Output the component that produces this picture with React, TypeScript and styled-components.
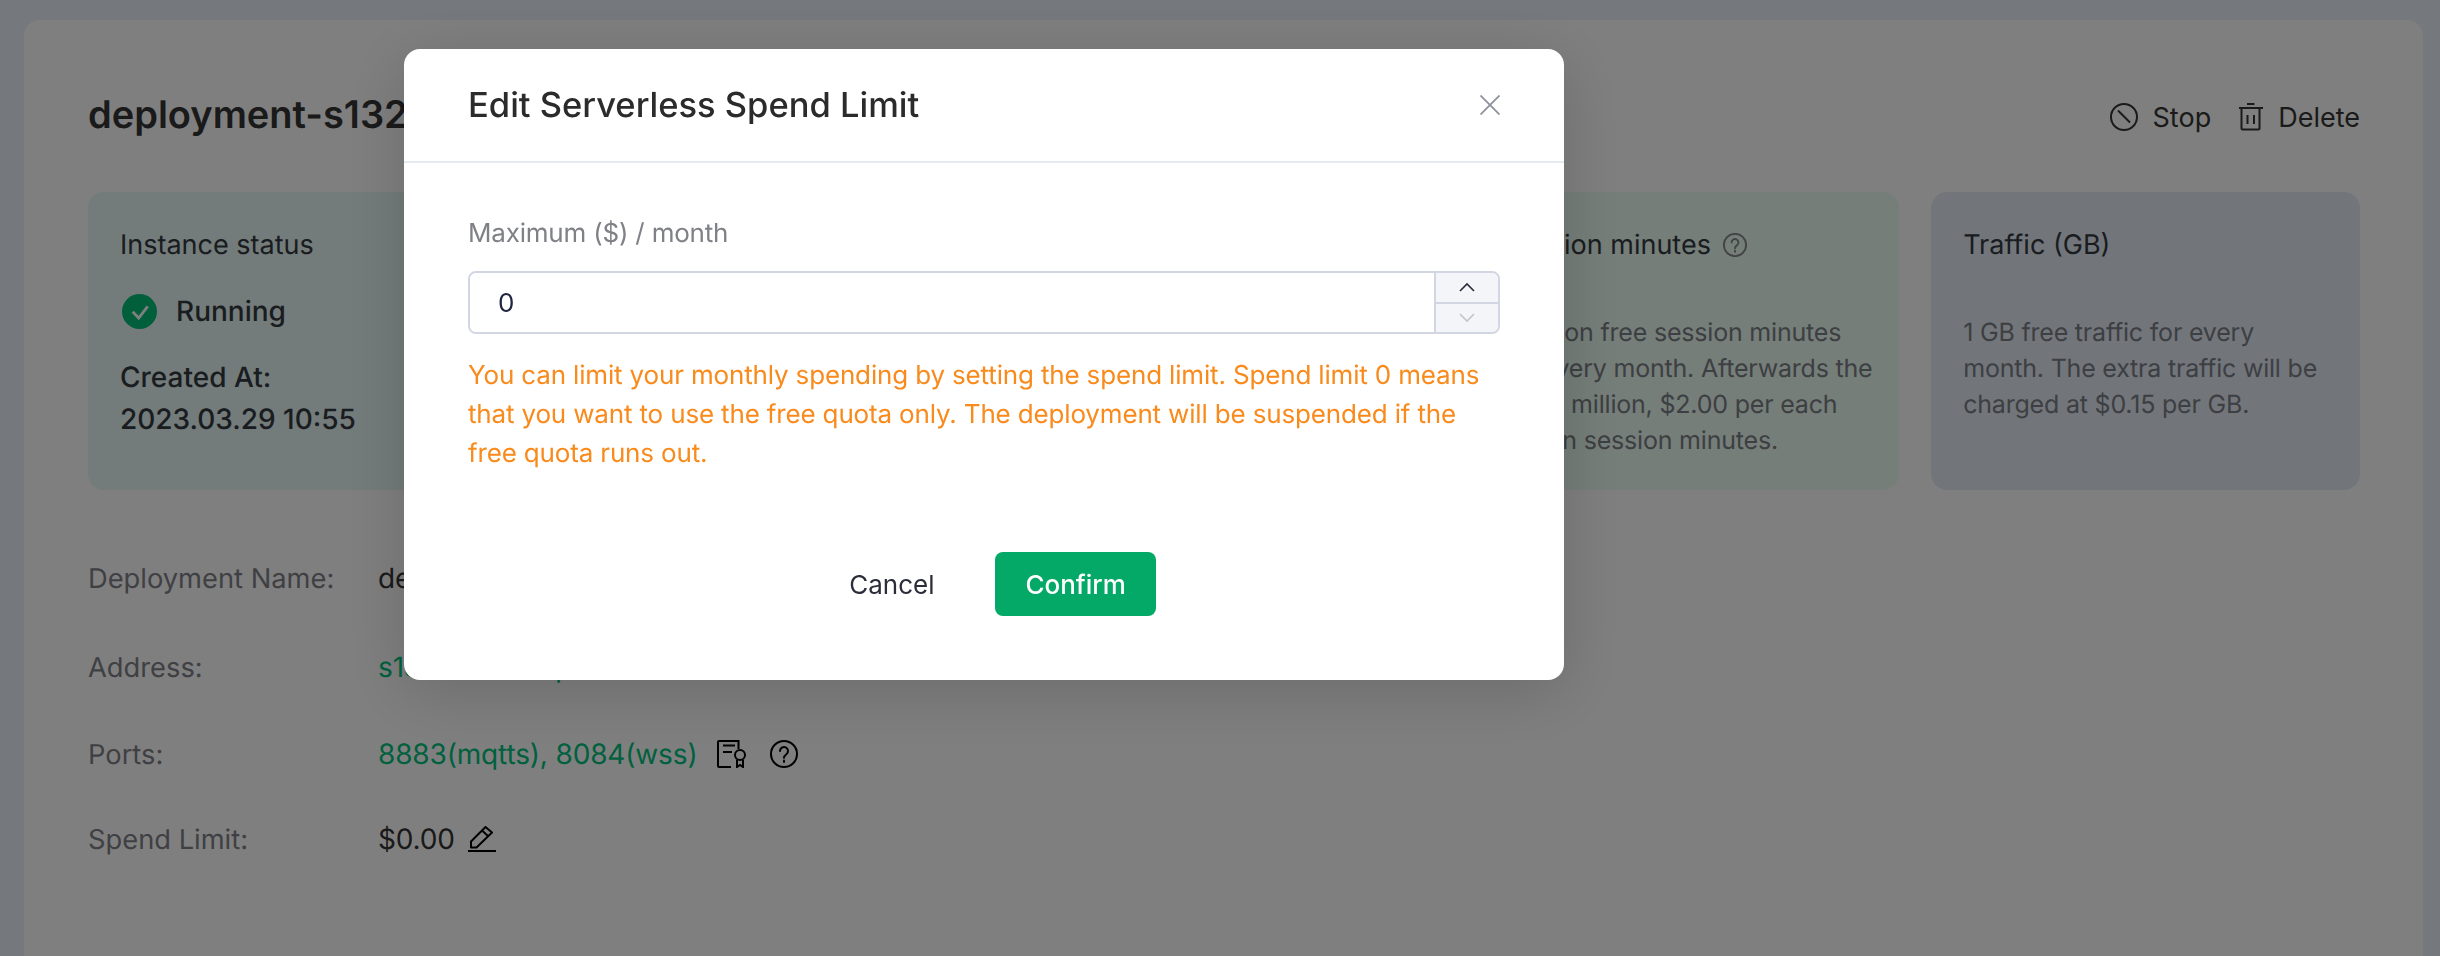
import * as React from 'react'
import styled, { createGlobalStyle } from 'styled-components'

const GlobalStyle = createGlobalStyle`
  html, body {
    margin: 0;
    height: 100%;
    overflow: hidden;
    background: #eaf2fc;
    font-family: Inter, "Noto Sans", sans-serif;
    text-rendering: geometricPrecision;
  }
`

const Page = styled.div`
  box-sizing: border-box;
  height: 956px;
  padding: 20px 17px 0 24px;
  overflow: hidden;
`

const Panel = styled.main`
  box-sizing: border-box;
  height: 100%;
  padding: 75px 63px 0 64px;
  background: #fff;
  border-radius: 16px 16px 0 0;
`

const Head = styled.header`
  display: flex;
  align-items: center;
  justify-content: space-between;
  height: 40px;
`

const Title = styled.h1`
  margin: 0;
  font-size: 38px;
  line-height: 40px;
  font-weight: 600;
  color: #353535;
`

const Actions = styled.div`
  display: flex;
  align-items: center;
  gap: 28px;
  padding-top: 4px;
`

const Action = styled.button`
  display: flex;
  align-items: center;
  gap: 15px;
  padding: 0;
  border: 0;
  background: none;
  font: inherit;
  font-size: 27px;
  color: #353535;
`

const Cards = styled.section`
  display: grid;
  grid-template-columns: repeat(5, minmax(0, 1fr));
  gap: 32px;
  margin-top: 57px;
`

const Card = styled.div<{ $tint: string }>`
  box-sizing: border-box;
  height: 298px;
  padding: 33px 32px;
  border-radius: 16px;
  background: ${p => p.$tint};
`

const CardTitle = styled.div`
  display: flex;
  align-items: center;
  gap: 12px;
  font-size: 27px;
  line-height: 40px;
  color: #353a40;
`

const CardText = styled.p<{ $nowrap?: boolean }>`
  margin: 50px 0 0;
  font-size: 25px;
  letter-spacing: -0.2px;
  line-height: 36px;
  white-space: ${p => (p.$nowrap ? 'nowrap' : 'normal')};
  color: #7a7e84;
`

const Status = styled.div`
  display: flex;
  align-items: center;
  gap: 19px;
  margin: 28px 0 0 2px;
  font-size: 28px;
  line-height: 36px;
  font-weight: 500;
  color: #353a40;
`

const Created = styled.div`
  margin-top: 27px;
  font-size: 28px;
  line-height: 42px;
  font-weight: 500;
  color: #353a40;
`

const Rows = styled.section`
  margin-top: 68px;
`

const Row = styled.div<{ $after?: number }>`
  display: flex;
  align-items: center;
  height: 40px;
  margin-bottom: ${p => p.$after ?? 0}px;
  font-size: 28px;
  letter-spacing: -0.15px;
`

const Label = styled.span`
  width: 290px;
  flex: none;
  font-size: 27.300px;
  letter-spacing: 0;
  color: #7f8186;
`

const Value = styled.span`
  color: #353535;
`

const LinkValue = styled.span`
  color: #02c27c;
`

const IconGroup = styled.span<{ $offset: number }>`
  display: flex;
  align-items: center;
  gap: 23px;
  margin-left: ${p => p.$offset}px;
`

const Overlay = styled.div`
  position: fixed;
  inset: 0;
  box-sizing: border-box;
  padding: 49px 0 0 404px;
  background: rgba(0, 0, 0, 0.5);
`

const Modal = styled.div`
  box-sizing: border-box;
  width: 1160px;
  height: 631px;
  background: #fff;
  border-radius: 16px;
  box-shadow: 0 12px 64px rgba(0, 0, 0, 0.16);
`

const ModalHead = styled.div`
  box-sizing: border-box;
  display: flex;
  align-items: center;
  justify-content: space-between;
  height: 114px;
  padding: 0 64px;
  border-bottom: 2px solid #e6eaf2;
`

const ModalTitle = styled.h2`
  margin: 0;
  font-size: 34.500px;
  font-weight: 500;
  color: #2b2b2b;
`

const ModalBody = styled.div`
  padding: 53px 64px 0;
`

const FieldLabel = styled.label`
  display: block;
  font-size: 26px;
  letter-spacing: -0.2px;
  line-height: 36px;
  color: #7f8186;
`

const InputBox = styled.div`
  box-sizing: border-box;
  display: flex;
  height: 63px;
  margin-top: 19px;
  border: 2px solid #d2d6e2;
  border-radius: 8px;
  overflow: hidden;
`

const NumberInput = styled.input`
  flex: 1;
  min-width: 0;
  padding: 0 28px;
  border: 0;
  outline: 0;
  font: inherit;
  font-size: 26px;
  color: #1f2440;
`

const Stepper = styled.div`
  display: flex;
  flex-direction: column;
  width: 62px;
  border-left: 2px solid #d2d6e2;
`

const StepButton = styled.span<{ $muted?: boolean }>`
  flex: 1;
  display: flex;
  align-items: center;
  justify-content: center;
  background: #f3f5f9;
  color: ${p => (p.$muted ? '#c2c5cc' : '#2b2d3a')};
  & + & {
    border-top: 2px solid #d2d6e2;
  }
`

const Hint = styled.p`
  margin: 22px 0 0;
  font-size: 26px;
  letter-spacing: -0.16px;
  line-height: 39px;
  color: #f98a1c;
`

const Footer = styled.div`
  display: flex;
  align-items: center;
  justify-content: center;
  gap: 31px;
  margin-top: 79px;
  padding-left: 7px;
`

const Button = styled.button<{ $primary?: boolean }>`
  box-sizing: border-box;
  height: 64px;
  padding: 0 30px;
  border: 0;
  border-radius: 8px;
  font: inherit;
  font-size: 26px;
  font-weight: ${p => (p.$primary ? 500 : 400)};
  color: ${p => (p.$primary ? '#fff' : '#2b2d3a')};
  background: ${p => (p.$primary ? '#04a967' : 'transparent')};
`

const CloseButton = styled.span`
  display: flex;
  color: #8f929c;
`

const StopIcon = () => (
  <svg width="28" height="28" viewBox="0 0 28 28" fill="none" stroke="currentColor" strokeWidth="2">
    <circle cx="14" cy="14" r="13" />
    <path d="M8 7.500l12 12" />
  </svg>
)

const TrashIcon = () => (
  <svg width="24" height="28" viewBox="0 0 24 28" fill="none" stroke="currentColor" strokeWidth="2">
    <path d="M8 1h7.500M0 5h24" />
    <path d="M2.500 5v20.500a1 1 0 0 0 1 1h16a1 1 0 0 0 1-1V5" />
    <path d="M8.500 12v9M15 12v9" />
  </svg>
)

const HelpIcon = ({ size, tone }: { size: number, tone?: string }) => (
  <svg width={size} height={size} viewBox="0 0 28 28" fill="none" stroke={tone ?? 'currentColor'} strokeWidth={size < 28 ? 2.200 : 2}>
    <circle cx="14" cy="14" r="13" />
    <path d="M10 11a4 4 0 1 1 6.400 3.200c-1.500 1.100-2.400 1.800-2.400 3.600" strokeLinecap="round" />
    <path d="M14 20.500v1.500" strokeLinecap="round" />
  </svg>
)

const CertificateIcon = () => (
  <svg width="30" height="28" viewBox="0 0 30 28" fill="none" stroke="currentColor" strokeWidth="2">
    <path d="M14 27H2a1 1 0 0 1-1-1V2a1 1 0 0 1 1-1h19.500v8" />
    <path d="M6 5.500h12M6 12h9" />
    <circle cx="23" cy="15" r="5" />
    <path d="M20 20v7l3-2 3 2v-7" />
  </svg>
)

const EditIcon = () => (
  <svg width="28" height="27" viewBox="0 0 28 27" fill="none" stroke="currentColor" strokeWidth="2">
    <path d="M3 21.500v-6L17.500 1l6.500 5.500-15.500 15z" strokeLinejoin="round" />
    <path d="M14 4.500l6 5.500" />
    <path d="M0 25h28" />
  </svg>
)

const RunningIcon = () => (
  <svg width="35" height="35" viewBox="0 0 35 35">
    <circle cx="17.500" cy="17.500" r="17.500" fill="#02be78" />
    <path d="M10.700 17.700l6 6.300 9-11.700" fill="none" stroke="#fff" strokeWidth="2.800" />
  </svg>
)

const CloseIcon = () => (
  <svg width="20" height="20" viewBox="0 0 20 20" fill="none" stroke="currentColor" strokeWidth="1.800">
    <path d="M.5.5l19 19M19.500.5l-19 19" />
  </svg>
)

const Chevron = ({ down }: { down?: boolean }) => (
  <svg width="16" height="10" viewBox="0 0 16 10" fill="none" stroke="currentColor" strokeWidth="1.600">
    <path d={ down ? 'M1 1l7 7 7-7' : 'M1 9l7-7 7 7' } />
  </svg>
)

export default function App() {
  return (
    <Page>
      <GlobalStyle />
      <Panel>
        <Head>
          <Title>{ 'deployment-s1327f4e' }</Title>
          <Actions>
            <Action><StopIcon />{ 'Stop' }</Action>
            <Action><TrashIcon />{ 'Delete' }</Action>
          </Actions>
        </Head>

        <Cards>
          <Card $tint={ '#e6f6f6' }>
            <CardTitle>{ 'Instance status' }</CardTitle>
            <Status><RunningIcon />{ 'Running' }</Status>
            <Created>{ 'Created At:' }<br />{ '2023.03.29 10:55' }</Created>
          </Card>
          <Card $tint={ '#e8f2f8' } />
          <Card $tint={ '#eaf6f4' } />
          <Card $tint={ '#ecfcf4' }>
            <CardTitle>{ 'Session minutes' }<HelpIcon size={ 24 } tone={ '#83878a' } /></CardTitle>
            <CardText $nowrap>
              { '1 million free session minutes' }<br />
              { 'for every month. Afterwards the' }<br />
              { 'first 1 million, $2.00 per each' }<br />
              { 'million session minutes.' }
            </CardText>
          </Card>
          <Card $tint={ '#e4ecf6' }>
            <CardTitle>{ 'Traffic (GB)' }</CardTitle>
            <CardText>{ '1 GB free traffic for every month. The extra traffic will be charged at $0.15 per GB.' }</CardText>
          </Card>
        </Cards>

        <Rows>
          <Row $after={ 49 }><Label>{ 'Deployment Name:' }</Label><Value>{ 'deployment-s1327f4e' }</Value></Row>
          <Row $after={ 47 }><Label>{ 'Address:' }</Label><LinkValue>{ 's1327f4e.emqx.cloud' }</LinkValue></Row>
          <Row $after={ 45 }>
            <Label>{ 'Ports:' }</Label>
            <LinkValue>{ '8883(mqtts), 8084(wss)' }</LinkValue>
            <IconGroup $offset={ 20 }><CertificateIcon /><HelpIcon size={ 28 } /></IconGroup>
          </Row>
          <Row>
            <Label>{ 'Spend Limit:' }</Label>
            <Value>{ '$0.00' }</Value>
            <IconGroup $offset={ 13 }><EditIcon /></IconGroup>
          </Row>
        </Rows>
      </Panel>

      <Overlay>
        <Modal>
          <ModalHead>
            <ModalTitle>{ 'Edit Serverless Spend Limit' }</ModalTitle>
            <CloseButton><CloseIcon /></CloseButton>
          </ModalHead>
          <ModalBody>
            <FieldLabel>{ 'Maximum ($) / month' }</FieldLabel>
            <InputBox>
              <NumberInput readOnly value={ '0' } />
              <Stepper>
                <StepButton><Chevron /></StepButton>
                <StepButton $muted><Chevron down /></StepButton>
              </Stepper>
            </InputBox>
            <Hint>{ 'You can limit your monthly spending by setting the spend limit. Spend limit 0 means that you want to use the free quota only. The deployment will be suspended if the free quota runs out.' }</Hint>
            <Footer>
              <Button>{ 'Cancel' }</Button>
              <Button $primary>{ 'Confirm' }</Button>
            </Footer>
          </ModalBody>
        </Modal>
      </Overlay>
    </Page>
  )
}
